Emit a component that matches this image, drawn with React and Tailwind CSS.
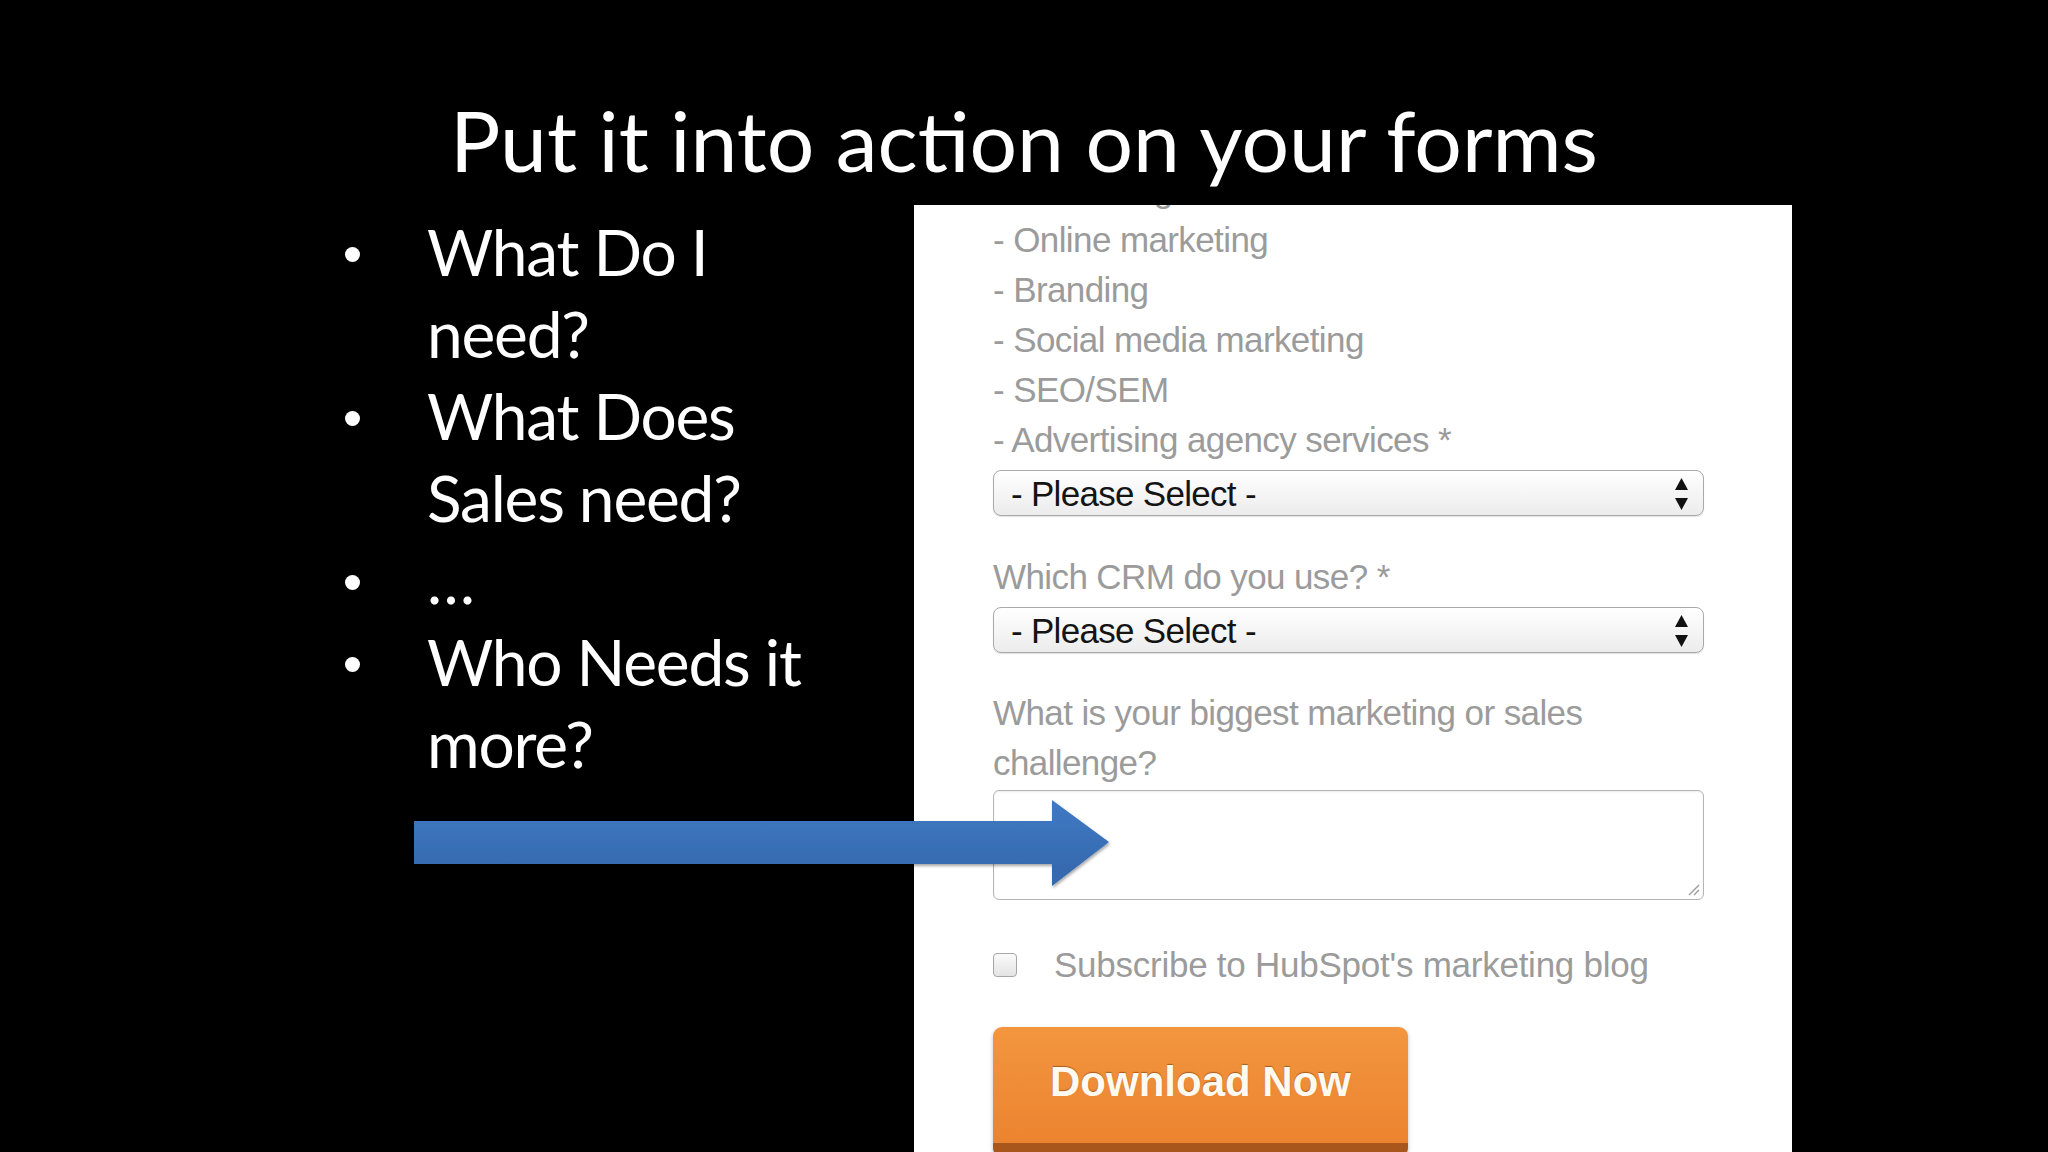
import React from "react";

const bullets = [
  ["What Do I", "need?"],
  ["What Does", "Sales need?"],
  ["…"],
  ["Who Needs it", "more?"],
];

const services = [
  "- Web design",
  "- Online marketing",
  "- Branding",
  "- Social media marketing",
  "- SEO/SEM",
  "- Advertising agency services *",
];

function SelectBox() {
  return (
    <div className="relative flex items-center w-[711px] h-[46px] rounded-[8px] border border-[#a9a9a9] bg-gradient-to-b from-[#ffffff] to-[#ececec] shadow-[0_1px_1px_rgba(0,0,0,0.12)] pl-[17px]">
      <span className="text-[35px] leading-none tracking-[-0.7px] text-[#141414]">- Please Select -</span>
      <svg className="absolute right-[14px] top-[7px]" width="15" height="32" viewBox="0 0 15 32">
        <path d="M7.5 0 L14 12 L1 12 Z" fill="#111" />
        <path d="M1 20 L14 20 L7.5 32 Z" fill="#111" />
      </svg>
    </div>
  );
}

export default function App() {
  return (
    <div className="relative w-[2048px] h-[1152px] bg-black overflow-hidden flex flex-col font-['Lato',sans-serif]">
      {/* Slide title */}
      <div className="h-[205px] shrink-0 pt-[99px] text-center">
        <h1 className="text-[84px] leading-[82px] text-white">Put it into action on your forms</h1>
      </div>

      <div className="flex flex-1 min-h-0">
        {/* Bullet list */}
        <div className="w-[914px] shrink-0 pl-[345px] pt-[6px]">
          <ul>
            {bullets.map((lines, i) => (
              <li key={i} className="flex items-start">
                <span className="mt-[36px] w-[15px] h-[15px] rounded-full bg-white shrink-0" />
                <span className="ml-[67px] text-[64px] leading-[82px] tracking-[-1.2px] text-white">
                  {lines.map((l, j) => (
                    <span key={j} className="block">{l}</span>
                  ))}
                </span>
              </li>
            ))}
          </ul>
        </div>

        {/* Form screenshot */}
        <div className="w-[878px] h-full overflow-hidden bg-white pl-[79px] font-['Liberation_Sans',Arial,sans-serif] text-[35px] tracking-[-0.6px] text-[#9b9b9b]">
          <div className="mt-[-40px]">
            {services.map((s) => (
              <div key={s} className="leading-[50px] h-[50px] whitespace-nowrap">{s}</div>
            ))}
          </div>
          <div className="mt-[5px]">
            <SelectBox />
          </div>

          <div className="mt-[36px] leading-[50px] h-[50px]">Which CRM do you use? *</div>
          <div className="mt-[5px]">
            <SelectBox />
          </div>

          <div className="mt-[35px] leading-[50px]">
            <div>What is your biggest marketing or sales</div>
            <div>challenge?</div>
          </div>
          <div className="relative mt-[2px] w-[711px] h-[110px] rounded-[6px] border border-[#b5b5b5] bg-white shadow-[inset_0_1px_2px_rgba(0,0,0,0.08)]">
            <svg className="absolute right-[3px] bottom-[3px]" width="14" height="14" viewBox="0 0 14 14">
              <path d="M13 3 L3 13 M13 8 L8 13" stroke="#9a9a9a" strokeWidth="1.4" />
            </svg>
          </div>

          <div className="mt-[40px] h-[50px] flex items-center">
            <span className="w-[24px] h-[24px] rounded-[4px] border border-[#a6a6a6] bg-gradient-to-b from-[#fafafa] to-[#e4e4e4] shrink-0" />
            <span className="ml-[37px] leading-[50px] tracking-[-0.25px] whitespace-nowrap">Subscribe to HubSpot's marketing blog</span>
          </div>

          <div className="mt-[37px] w-[415px] h-[130px] rounded-[9px] border-b-[14px] border-[#a9561d] bg-gradient-to-b from-[#f3963f] to-[#ec832f] flex items-start justify-center pt-[30px] shadow-[0_2px_4px_rgba(0,0,0,0.25)]">
            <span className="text-[42px] leading-[50px] font-bold tracking-[0px] text-[#fff9f0] [text-shadow:0_-1px_1px_rgba(120,60,10,0.6)]">Download Now</span>
          </div>
        </div>
      </div>

      {/* Blue arrow overlay */}
      <svg className="absolute left-[414px] top-[800px] z-10" width="700" height="92" viewBox="0 0 700 92">
        <defs>
          <linearGradient id="arrowFill" x1="0" y1="0" x2="0" y2="1">
            <stop offset="0" stopColor="#3f7ac4" />
            <stop offset="1" stopColor="#3466ab" />
          </linearGradient>
          <filter id="arrowShadow" x="-5%" y="-20%" width="110%" height="150%">
            <feDropShadow dx="1" dy="2" stdDeviation="1.5" floodColor="#000" floodOpacity="0.35" />
          </filter>
        </defs>
        <path
          d="M0 21 L638 21 L638 0 L695 42 L638 86 L638 64 L0 64 Z"
          fill="url(#arrowFill)"
          filter="url(#arrowShadow)"
        />
      </svg>
    </div>
  );
}
